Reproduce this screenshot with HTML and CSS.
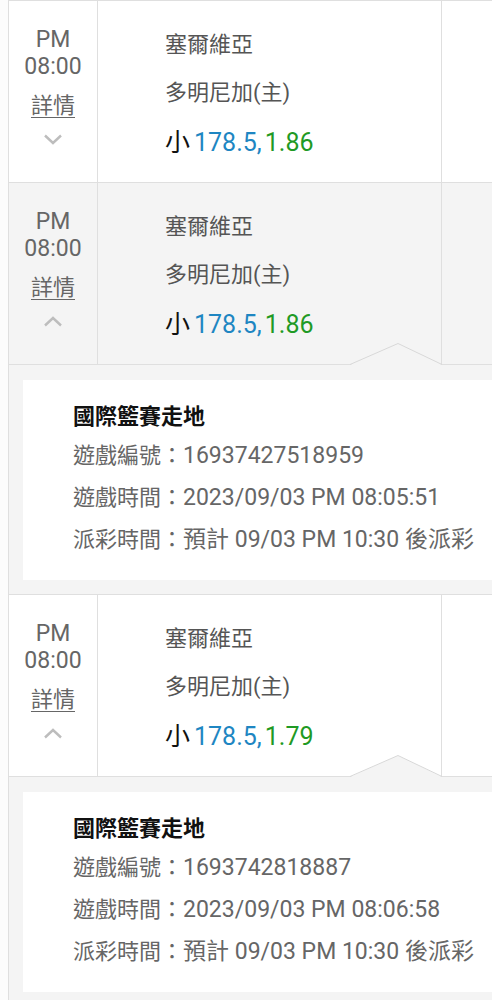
FILE: index.html
```html
<!DOCTYPE html>
<html lang="zh-Hant">
<head>
    <meta charset="UTF-8">
    <meta name="viewport" content="width=device-width, initial-scale=1.0">
    <title>注單紀錄</title>
    <link rel="stylesheet" href="styles.css">
</head>
<body>
    <div class="bet-list">

        <!-- collapsed row -->
        <div class="bet-row">
            <div class="time-col">
                <div>PM</div>
                <div>08:00</div>
                <a class="detail-link" href="#">詳情</a>
                <svg class="chevron" viewBox="0 0 20 11"><polyline points="2,1.5 10,9 18,1.5"/></svg>
            </div>
            <div class="match-col">
                <div>塞爾維亞</div>
                <div>多明尼加(主)</div>
                <div class="odds">小<span class="line">178.5,</span><span class="price">1.86</span></div>
            </div>
            <div class="extra-col"></div>
        </div>

        <!-- expanded row -->
        <div class="bet-row open">
            <div class="time-col">
                <div>PM</div>
                <div>08:00</div>
                <a class="detail-link" href="#">詳情</a>
                <svg class="chevron" viewBox="0 0 20 11"><polyline points="2,9.5 10,2 18,9.5"/></svg>
            </div>
            <div class="match-col">
                <div>塞爾維亞</div>
                <div>多明尼加(主)</div>
                <div class="odds">小<span class="line">178.5,</span><span class="price">1.86</span></div>
            </div>
            <div class="extra-col"></div>
        </div>
        <div class="bet-detail">
            <svg class="notch" viewBox="0 0 92 22"><polygon points="0,22 48,0.5 92,22"/><polyline points="0,21.5 48,0.5 92,21.5"/></svg>
            <div class="detail-card">
                <div class="detail-title">國際籃賽走地</div>
                <div class="detail-line">遊戲編號：<span class="val">16937427518959</span></div>
                <div class="detail-line">遊戲時間：<span class="val">2023/09/03 PM 08:05:51</span></div>
                <div class="detail-line">派彩時間：<span class="val">預計 09/03 PM 10:30 後派彩</span></div>
            </div>
        </div>

        <!-- expanded row, white -->
        <div class="bet-row">
            <div class="time-col">
                <div>PM</div>
                <div>08:00</div>
                <a class="detail-link" href="#">詳情</a>
                <svg class="chevron" viewBox="0 0 20 11"><polyline points="2,9.5 10,2 18,9.5"/></svg>
            </div>
            <div class="match-col">
                <div>塞爾維亞</div>
                <div>多明尼加(主)</div>
                <div class="odds">小<span class="line">178.5,</span><span class="price">1.79</span></div>
            </div>
            <div class="extra-col"></div>
        </div>
        <div class="bet-detail">
            <svg class="notch" viewBox="0 0 92 22"><polygon points="0,22 48,0.5 92,22"/><polyline points="0,21.5 48,0.5 92,21.5"/></svg>
            <div class="detail-card">
                <div class="detail-title">國際籃賽走地</div>
                <div class="detail-line">遊戲編號：<span class="val">1693742818887</span></div>
                <div class="detail-line">遊戲時間：<span class="val">2023/09/03 PM 08:06:58</span></div>
                <div class="detail-line">派彩時間：<span class="val">預計 09/03 PM 10:30 後派彩</span></div>
            </div>
        </div>

    </div>
</body>
</html>
```

FILE: styles.css
```css
body {
    margin: 0;
    background-color: #fcfcfc;
    font-family: Roboto, "Noto Sans CJK TC", sans-serif;
    font-size: 22px;
    color: #555;
    overflow: hidden;
}
.bet-list {
    margin-left: 8px;
    border-left: 1px solid #dfdfdf;
    border-top: 1px solid #dfdfdf;
    background: #fff;
}
.bet-row {
    display: flex;
    height: 181px;
    border-bottom: 1px solid #dfdfdf;
    background: #fff;
}
.bet-row.open {
    background: #f4f4f4;
}
.time-col {
    width: 88px;
    border-right: 1px solid #dfdfdf;
    padding-top: 25px;
    text-align: center;
    font-size: 23px;
    line-height: 27px;
    color: #666;
}
.detail-link {
    display: block;
    margin-top: 12px;
    font-size: 22px;
    color: #666;
    text-decoration: underline;
    text-underline-offset: 4px;
    text-decoration-thickness: 1px;
}
.chevron {
    display: block;
    width: 20px;
    height: 11px;
    margin: 15px auto 0;
    fill: none;
    stroke: #bdbdbd;
    stroke-width: 2.4;
}
.match-col {
    width: 276px;
    padding: 20px 0 0 67px;
    border-right: 1px solid #dfdfdf;
    line-height: 48px;
}
.odds {
    font-size: 25px;
    line-height: 52px;
    color: #111;
}
.odds .line {
    margin-left: 4px;
    color: #1e86c2;
}
.odds .price {
    margin-left: 3px;
    color: #1f9a25;
}
.extra-col {
    flex: 1;
}
.bet-detail {
    position: relative;
    background: #f4f4f4;
    padding: 15px 0 14px 14px;
    border-bottom: 1px solid #dfdfdf;
}
.notch {
    position: absolute;
    left: 341px;
    top: -22px;
    width: 92px;
    height: 22px;
}
.notch polygon {
    fill: #f4f4f4;
}
.notch polyline {
    fill: none;
    stroke: #d8d8d8;
    stroke-width: 1;
}
.detail-card {
    background: #fff;
    height: 162px;
    padding: 19px 0 19px 50px;
}
.detail-title {
    font-weight: bold;
    color: #111;
    line-height: 36px;
}
.detail-line {
    line-height: 42px;
    color: #666;
}
.detail-line .val {
    font-size: 23px;
}
```
